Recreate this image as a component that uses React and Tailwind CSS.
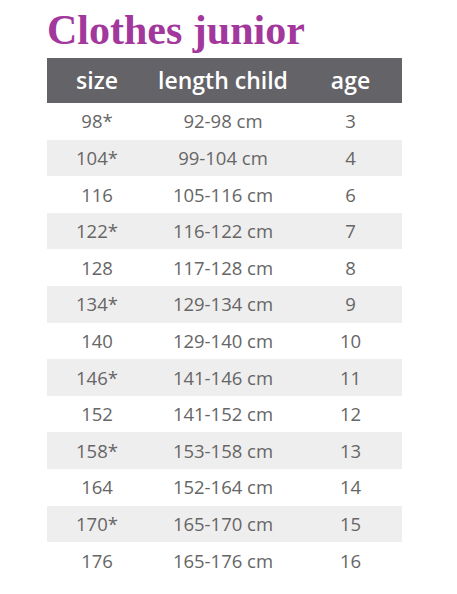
const rows = [
  ['98*', '92-98 cm', '3'],
  ['104*', '99-104 cm', '4'],
  ['116', '105-116 cm', '6'],
  ['122*', '116-122 cm', '7'],
  ['128', '117-128 cm', '8'],
  ['134*', '129-134 cm', '9'],
  ['140', '129-140 cm', '10'],
  ['146*', '141-146 cm', '11'],
  ['152', '141-152 cm', '12'],
  ['158*', '153-158 cm', '13'],
  ['164', '152-164 cm', '14'],
  ['170*', '165-170 cm', '15'],
  ['176', '165-176 cm', '16'],
]

export default function App() {
  return (
    <div className="min-h-screen bg-white pl-[47px] pt-[6px]">
      <h1 className="font-['Liberation_Serif',serif] text-[42px] font-bold leading-[48px] text-[#a2379c]">
        Clothes junior
      </h1>
      <div className="mt-[4px] w-[355px] font-['Open_Sans',sans-serif]">
        <div className="grid h-[45px] grid-cols-[100px_152px_103px] items-center bg-[#646368] text-center text-[23px] font-semibold text-white">
          <span>size</span>
          <span>length child</span>
          <span>age</span>
        </div>
        {rows.map((r, i) => (
          <div
            key={r[0]}
            className={`grid h-[36.6px] grid-cols-[100px_152px_103px] items-center text-center text-[18.5px] text-[#666666] ${
              i % 2 === 1 ? 'bg-[#efeeee]' : 'bg-white'
            }`}
          >
            <span>{r[0]}</span>
            <span>{r[1]}</span>
            <span>{r[2]}</span>
          </div>
        ))}
      </div>
    </div>
  )
}
